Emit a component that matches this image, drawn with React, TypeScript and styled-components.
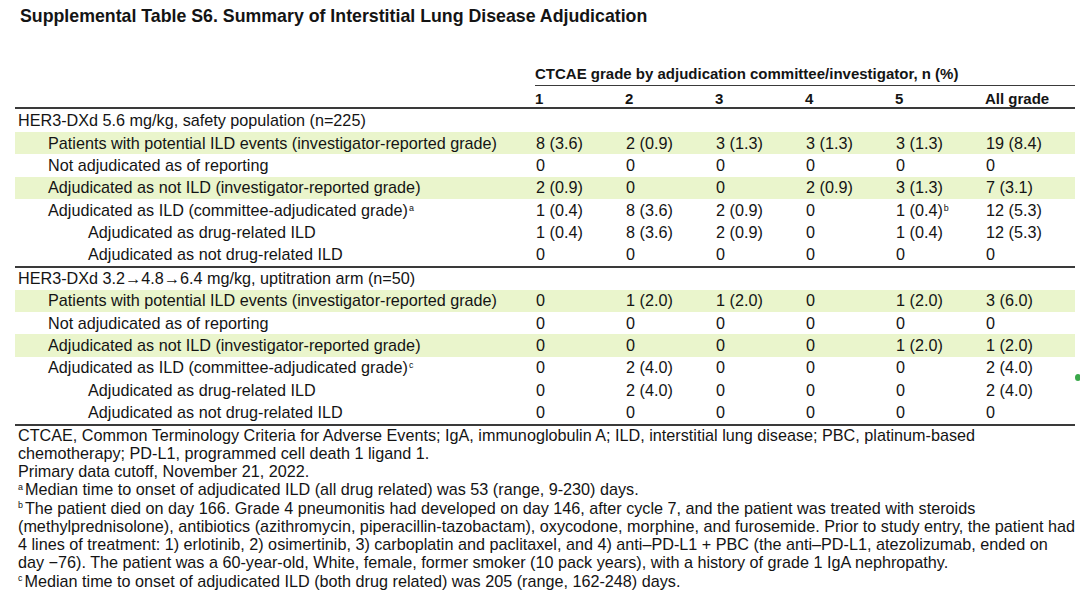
import React from 'react';
import styled, { createGlobalStyle } from 'styled-components';

const GlobalStyle = createGlobalStyle`
  html, body {
    margin: 0;
    padding: 0;
    background: #fff;
  }
  body {
    font-family: "Liberation Sans", Arial, sans-serif;
    color: #141414;
  }
`;

const GREEN = '#eaf5cc';
const RULE = '#3a3a3a';
const INDENT = [3, 33, 73];

const Page = styled.div`
  position: relative;
  width: 1080px;
  height: 615px;
  overflow: hidden;
  padding-left: 15px;
  box-sizing: border-box;
`;

const Title = styled.h1`
  margin: 0 0 0 5px;
  font-size: 17.75px;
  line-height: 33px;
  font-weight: 700;
`;

const Table = styled.div`
  margin-top: 29px;
  width: 1060px;
  font-size: 16.2px;
`;

const Row = styled.div<{ $h: number; $shade?: boolean; $rule?: number; $end?: boolean }>`
  display: grid;
  grid-template-columns: 520px repeat(6, 90px);
  height: ${p => p.$h}px;
  align-items: ${p => (p.$end ? 'end' : 'center')};
  background: ${p => (p.$shade ? GREEN : 'transparent')};
  border-bottom: ${p => (p.$rule ? `${p.$rule}px solid ${RULE}` : 'none')};
  white-space: nowrap;
`;

const GroupHead = styled.div`
  grid-column: 2 / span 6;
  align-self: stretch;
  display: flex;
  align-items: center;
  font-size: 15px;
  font-weight: 700;
  border-bottom: 1px solid ${RULE};
`;

const HeadCell = styled.div`
  font-size: 15px;
  font-weight: 700;
  line-height: 17px;
`;

const Label = styled.div<{ $level: number }>`
  padding-left: ${p => INDENT[p.$level]}px;
`;

const Cell = styled.div`
  padding-left: 1px;
`;

const Sup = styled.sup`
  font-size: 0.55em;
  vertical-align: 0.55em;
  line-height: 0;
  margin-left: 1px;
`;

const SectionBox = styled.div`
  border-bottom: 2px solid ${RULE};
`;

const Notes = styled.div`
  padding: 0 0 0 3px;
  font-size: 16.2px;
  line-height: 18.25px;
  white-space: nowrap;
`;

const NoteMark = styled.sup`
  font-size: 0.55em;
  vertical-align: 0.6em;
  line-height: 0;
  margin-right: 2px;
`;

const EdgeDot = styled.div`
  position: absolute;
  left: 1075px;
  top: 374px;
  width: 6px;
  height: 7px;
  border-radius: 50%;
  background: #3aa84a;
`;

type DataRow = {
  label: string;
  level: number;
  shade?: boolean;
  sup?: string;
  values: React.ReactNode[];
};

type Section = {
  title: string;
  rows: DataRow[];
};

const grades = ['1', '2', '3', '4', '5', 'All grade'];

const sections: Section[] = [
  {
    title: 'HER3-DXd 5.6 mg/kg, safety population (n=225)',
    rows: [
      {
        label: 'Patients with potential ILD events (investigator-reported grade)',
        level: 1,
        shade: true,
        values: ['8 (3.6)', '2 (0.9)', '3 (1.3)', '3 (1.3)', '3 (1.3)', '19 (8.4)'],
      },
      { label: 'Not adjudicated as of reporting', level: 1, values: ['0', '0', '0', '0', '0', '0'] },
      {
        label: 'Adjudicated as not ILD (investigator-reported grade)',
        level: 1,
        shade: true,
        values: ['2 (0.9)', '0', '0', '2 (0.9)', '3 (1.3)', '7 (3.1)'],
      },
      {
        label: 'Adjudicated as ILD (committee-adjudicated grade)',
        level: 1,
        sup: 'a',
        values: [
          '1 (0.4)',
          '8 (3.6)',
          '2 (0.9)',
          '0',
          <>
            1 (0.4)<Sup>b</Sup>
          </>,
          '12 (5.3)',
        ],
      },
      {
        label: 'Adjudicated as drug-related ILD',
        level: 2,
        values: ['1 (0.4)', '8 (3.6)', '2 (0.9)', '0', '1 (0.4)', '12 (5.3)'],
      },
      { label: 'Adjudicated as not drug-related ILD', level: 2, values: ['0', '0', '0', '0', '0', '0'] },
    ],
  },
  {
    title: 'HER3-DXd 3.2\u21924.8\u21926.4 mg/kg, uptitration arm (n=50)',
    rows: [
      {
        label: 'Patients with potential ILD events (investigator-reported grade)',
        level: 1,
        shade: true,
        values: ['0', '1 (2.0)', '1 (2.0)', '0', '1 (2.0)', '3 (6.0)'],
      },
      { label: 'Not adjudicated as of reporting', level: 1, values: ['0', '0', '0', '0', '0', '0'] },
      {
        label: 'Adjudicated as not ILD (investigator-reported grade)',
        level: 1,
        shade: true,
        values: ['0', '0', '0', '0', '1 (2.0)', '1 (2.0)'],
      },
      {
        label: 'Adjudicated as ILD (committee-adjudicated grade)',
        level: 1,
        sup: 'c',
        values: ['0', '2 (4.0)', '0', '0', '0', '2 (4.0)'],
      },
      {
        label: 'Adjudicated as drug-related ILD',
        level: 2,
        values: ['0', '2 (4.0)', '0', '0', '0', '2 (4.0)'],
      },
      { label: 'Adjudicated as not drug-related ILD', level: 2, values: ['0', '0', '0', '0', '0', '0'] },
    ],
  },
];

const SectionBlock = ({ section, headH }: { section: Section; headH: number }) => (
  <SectionBox>
    <Row $h={headH}>
      <Label $level={0}>{section.title}</Label>
    </Row>
    {section.rows.map((row, i) => (
      <Row key={i} $h={22.3} $shade={row.shade}>
        <Label $level={row.level}>
          {row.label}
          {row.sup && <Sup>{row.sup}</Sup>}
        </Label>
        {row.values.map((v, j) => (
          <Cell key={j}>{v}</Cell>
        ))}
      </Row>
    ))}
  </SectionBox>
);

export default function App() {
  return (
    <>
      <GlobalStyle />
      <Page>
        <Title>Supplemental Table S6. Summary of Interstitial Lung Disease Adjudication</Title>
        <Table>
          <Row $h={24}>
            <div />
            <GroupHead>CTCAE grade by adjudication committee/investigator, n (%)</GroupHead>
          </Row>
          <Row $h={21} $rule={2} $end>
            <div />
            {grades.map(g => (
              <HeadCell key={g}>{g}</HeadCell>
            ))}
          </Row>
          {sections.map((s, i) => (
            <SectionBlock key={i} section={s} headH={i === 0 ? 23 : 22} />
          ))}
        </Table>
        <Notes>
          CTCAE, Common Terminology Criteria for Adverse Events; IgA, immunoglobulin A; ILD, interstitial lung disease; PBC, platinum-based
          <br />
          chemotherapy; PD-L1, programmed cell death 1 ligand 1.
          <br />
          Primary data cutoff, November 21, 2022.
          <br />
          <NoteMark>a</NoteMark>Median time to onset of adjudicated ILD (all drug related) was 53 (range, 9-230) days.
          <br />
          <NoteMark>b</NoteMark>The patient died on day 166. Grade 4 pneumonitis had developed on day 146, after cycle 7, and the patient was treated with steroids
          <br />
          (methylprednisolone), antibiotics (azithromycin, piperacillin-tazobactam), oxycodone, morphine, and furosemide. Prior to study entry, the patient had
          <br />
          4 lines of treatment: 1) erlotinib, 2) osimertinib, 3) carboplatin and paclitaxel, and 4) anti–PD-L1 + PBC (the anti–PD-L1, atezolizumab, ended on
          <br />
          day −76). The patient was a 60-year-old, White, female, former smoker (10 pack years), with a history of grade 1 IgA nephropathy.
          <br />
          <NoteMark>c</NoteMark>Median time to onset of adjudicated ILD (both drug related) was 205 (range, 162-248) days.
        </Notes>
        <EdgeDot />
      </Page>
    </>
  );
}
